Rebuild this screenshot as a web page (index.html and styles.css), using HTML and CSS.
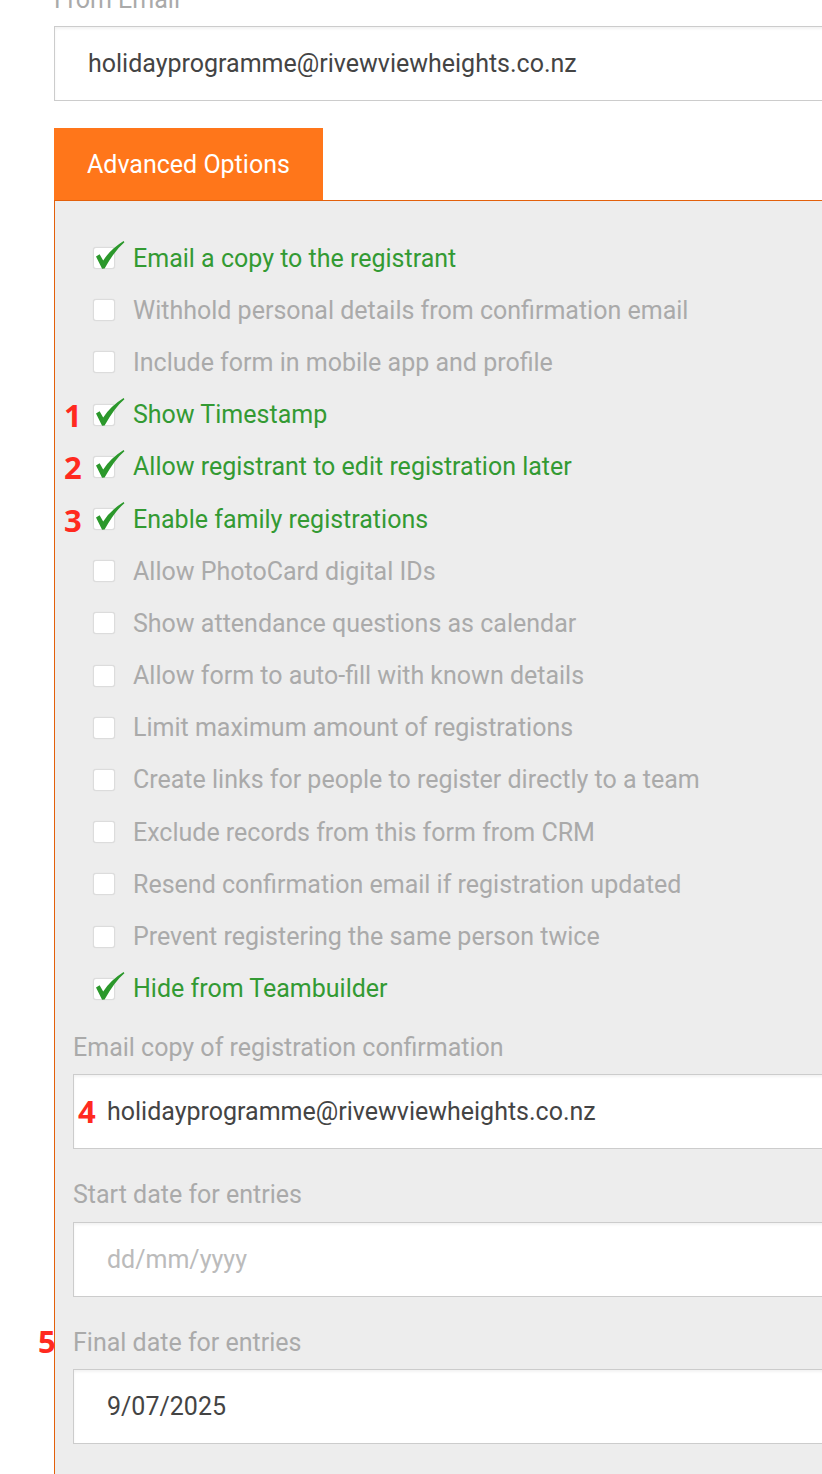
FILE: index.html
```html
<!DOCTYPE html>
<html lang="en">
<head>
<meta charset="utf-8">
<title>Advanced Options</title>
<link rel="stylesheet" href="styles.css">
</head>
<body>
<div class="page">
  <div class="field field-top">
    <div class="field-label">From Email</div>
    <div class="input"><span class="input-text">holidayprogramme@rivewviewheights.co.nz</span></div>
  </div>

  <div class="tabs"><div class="tab">Advanced Options</div></div>

  <div class="panel">
    <ul class="options">
      <li class="option checked"><span class="box"><svg class="tick" viewBox="0 0 30 30"><path d="M0 15.5 L3.6 13.2 L7.2 19.6 Q14 8.5 27.6 0 L28.4 1.2 Q18.5 9.5 8.6 27.6 L6.1 27.8 Z"/></svg></span><span class="option-label">Email a copy to the registrant</span></li>
      <li class="option"><span class="box"></span><span class="option-label">Withhold personal details from confirmation email</span></li>
      <li class="option"><span class="box"></span><span class="option-label">Include form in mobile app and profile</span></li>
      <li class="option checked"><span class="marker">1</span><span class="box"><svg class="tick" viewBox="0 0 30 30"><path d="M0 15.5 L3.6 13.2 L7.2 19.6 Q14 8.5 27.6 0 L28.4 1.2 Q18.5 9.5 8.6 27.6 L6.1 27.8 Z"/></svg></span><span class="option-label">Show Timestamp</span></li>
      <li class="option checked"><span class="marker">2</span><span class="box"><svg class="tick" viewBox="0 0 30 30"><path d="M0 15.5 L3.6 13.2 L7.2 19.6 Q14 8.5 27.6 0 L28.4 1.2 Q18.5 9.5 8.6 27.6 L6.1 27.8 Z"/></svg></span><span class="option-label">Allow registrant to edit registration later</span></li>
      <li class="option checked"><span class="marker">3</span><span class="box"><svg class="tick" viewBox="0 0 30 30"><path d="M0 15.5 L3.6 13.2 L7.2 19.6 Q14 8.5 27.6 0 L28.4 1.2 Q18.5 9.5 8.6 27.6 L6.1 27.8 Z"/></svg></span><span class="option-label">Enable family registrations</span></li>
      <li class="option"><span class="box"></span><span class="option-label">Allow PhotoCard digital IDs</span></li>
      <li class="option"><span class="box"></span><span class="option-label">Show attendance questions as calendar</span></li>
      <li class="option"><span class="box"></span><span class="option-label">Allow form to auto-fill with known details</span></li>
      <li class="option"><span class="box"></span><span class="option-label">Limit maximum amount of registrations</span></li>
      <li class="option"><span class="box"></span><span class="option-label">Create links for people to register directly to a team</span></li>
      <li class="option"><span class="box"></span><span class="option-label">Exclude records from this form from CRM</span></li>
      <li class="option"><span class="box"></span><span class="option-label">Resend confirmation email if registration updated</span></li>
      <li class="option"><span class="box"></span><span class="option-label">Prevent registering the same person twice</span></li>
      <li class="option checked"><span class="box"><svg class="tick" viewBox="0 0 30 30"><path d="M0 15.5 L3.6 13.2 L7.2 19.6 Q14 8.5 27.6 0 L28.4 1.2 Q18.5 9.5 8.6 27.6 L6.1 27.8 Z"/></svg></span><span class="option-label">Hide from Teambuilder</span></li>
    </ul>

    <div class="field">
      <div class="field-label">Email copy of registration confirmation</div>
      <div class="input"><span class="marker marker-in">4</span><span class="input-text">holidayprogramme@rivewviewheights.co.nz</span></div>
    </div>

    <div class="field">
      <div class="field-label">Start date for entries</div>
      <div class="input"><span class="input-text placeholder">dd/mm/yyyy</span></div>
    </div>

    <div class="field">
      <div class="field-label"><span class="marker marker-out">5</span>Final date for entries</div>
      <div class="input"><span class="input-text">9/07/2025</span></div>
    </div>
  </div>
</div>
</body>
</html>
```

FILE: styles.css
```css
html, body {
  margin: 0;
  padding: 0;
  overflow: hidden;
  background: #ffffff;
}

body {
  font-family: Roboto, "Noto Sans", "Liberation Sans", sans-serif;
  font-size: 25px;
  color: #444444;
}

.page {
  width: 1150px;
  padding-left: 54px;
  margin-top: -15.5px;
}

.field {
  margin-bottom: 31px;
}

.field-top {
  margin-bottom: 27px;
}

.field-label {
  position: relative;
  line-height: 30px;
  color: #aaaaaa;
  margin-bottom: 11.5px;
}

.input {
  position: relative;
  height: 75px;
  box-sizing: border-box;
  border: 1px solid #cccccc;
  background: #ffffff;
  box-shadow: inset 0 2px 3px rgba(0, 0, 0, 0.05);
  padding-left: 33px;
  display: flex;
  align-items: center;
}

.input-text {
  color: #444444;
}

.input-text.placeholder {
  color: #bbbbbb;
}

.tabs {
  display: flex;
}

.tab {
  width: 269px;
  height: 72px;
  box-sizing: border-box;
  background: #ff761a;
  color: #ffffff;
  padding-left: 33px;
  display: flex;
  align-items: center;
}

.panel {
  background: #ededed;
  border-top: 1px solid #e3600b;
  border-left: 1px solid #e3600b;
  padding: 31px 0 40px 18px;
}

.options {
  list-style: none;
  margin: 0 0 18px 0;
  padding: 0;
}

.option {
  position: relative;
  height: 52.2px;
  display: flex;
  align-items: center;
  padding-left: 20px;
  color: #aaaaaa;
}

.option.checked {
  color: #339a33;
}

.box {
  position: relative;
  width: 22px;
  height: 22px;
  box-sizing: border-box;
  flex: none;
  background: #ffffff;
  border: 1px solid #dcdcdc;
  border-radius: 3px;
  box-shadow: 0 0 1px rgba(0, 0, 0, 0.12);
  margin-right: 18px;
}

.tick {
  position: absolute;
  left: 2px;
  top: -7px;
  width: 30px;
  height: 30px;
  fill: #2b982b;
}

.marker {
  position: absolute;
  font-family: "Open Sans", "Noto Sans", sans-serif;
  font-weight: 700;
  font-size: 31px;
  line-height: 30px;
  color: #ff2a1f;
}

.option .marker {
  left: -9px;
  top: 11.6px;
}

.marker-in {
  left: 4px;
  top: 21px;
}

.marker-out {
  left: -35px;
  top: -2px;
}
```
